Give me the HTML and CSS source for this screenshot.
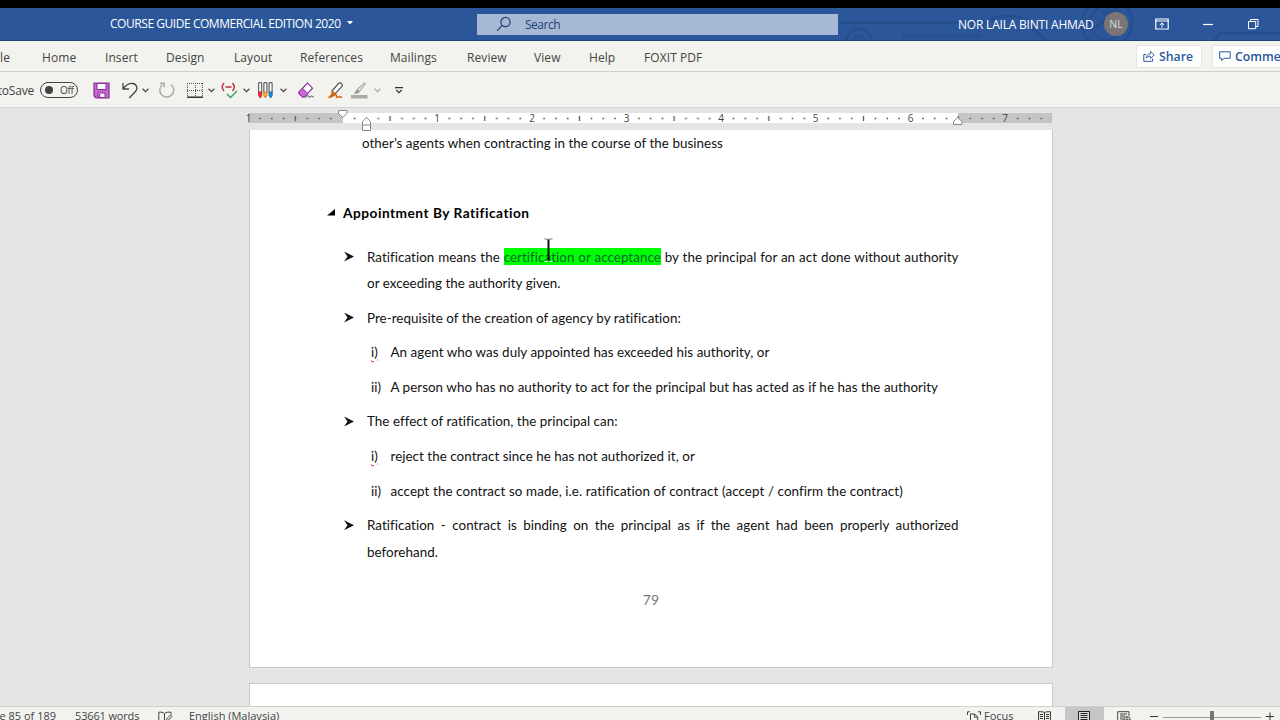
FILE: index.html
```html
<!DOCTYPE html>
<html lang="en">
<head>
  <meta charset="UTF-8" />
  <meta name="viewport" content="width=device-width, initial-scale=1" />
  <title>COURSE GUIDE COMMERCIAL EDITION 2020</title>
  <link rel="stylesheet" href="styles.css">
</head>
<body>

  <header class="titlebar">
    <div class="doc-name"><span class="doc-title">COURSE GUIDE COMMERCIAL EDITION 2020</span>
      <svg width="6" height="4" viewBox="0 0 6 4"><path d="M0 0h6L3 3.5z" fill="#fff"/></svg>
    </div>
    <div class="search">
      <svg width="16" height="16" viewBox="0 0 16 16" fill="none" stroke="#1f3f78" stroke-width="1.2"><circle cx="9.5" cy="6" r="4.6"/><path d="M6.2 9.4L1 14.8"/></svg>
      <span>Search</span>
    </div>
    <div class="account">
      <svg class="circuit" width="440" height="33" viewBox="0 0 440 33" fill="none" stroke="#284f8d" stroke-width="3">
        <path d="M0 14.500h132l16 0 8-6h22l28 24"/>
        <circle cx="19" cy="34" r="13"/><circle cx="19" cy="34" r="6"/>
        <path d="M64 33v-5h78"/>
        <circle cx="267" cy="15" r="25"/><circle cx="267" cy="15" r="17" stroke-width="2"/>
        <path d="M255 20l20-15M262 4h14v12M374 33l6-8h60"/>
      </svg>
      <span class="user">NOR LAILA BINTI AHMAD</span>
      <span class="avatar">NL</span>
      <svg class="win-ribbon" width="14" height="12" viewBox="0 0 14 12" fill="none" stroke="#fff"><path d="M.8 1h12.400v10H.8zM1 3h12" stroke-width="1.200"/><path d="M7 9.500V5M4.800 7L7 4.900 9.200 7"/></svg>
      <svg class="win-min" width="10" height="12" viewBox="0 0 10 12"><path d="M0 6.500h10" stroke="#fff" stroke-width="1.200"/></svg>
      <svg class="win-restore" width="11" height="12" viewBox="0 0 11 12" fill="none" stroke="#fff"><path d="M.5 3.500h7.200v7.200H.5zM2.500 3.500v-2h7.500v7H7.700"/></svg>
    </div>
  </header>

  <nav class="tabs">
    <span class="cut file">File</span>
    <span>Home</span>
    <span>Insert</span>
    <span>Design</span>
    <span>Layout</span>
    <span>References</span>
    <span>Mailings</span>
    <span>Review</span>
    <span>View</span>
    <span>Help</span>
    <span>FOXIT PDF</span>
    <button class="share">
      <svg width="12" height="12" viewBox="0 0 12 12" fill="none" stroke="#2b579a"><path d="M3 4.500H.8v6.800h8.800V8.500"/><path d="M3.200 8.200c.3-3 1.800-4.300 4.200-4.300V1.200l3.800 3.700-3.800 3.600V6.200C5.500 6.100 4.300 6.700 3.200 8.200z" stroke-width=".9"/></svg>
      <span>Share</span>
    </button>
    <button class="comments">
      <svg width="12" height="11" viewBox="0 0 12 11" fill="none" stroke="#2b579a"><path d="M.6.8h10.600v6.500H5L2.600 9.700V7.300h-2z"/></svg>
      <span>Comments</span>
    </button>
  </nav>

  <div class="quick">
    <span class="cut autosave">AutoSave</span>
    <span class="toggle"><i></i>Off</span>
    <!-- save -->
    <svg width="17" height="17" viewBox="0 0 17 17"><path d="M1 1h15v15H3l-2-2z" fill="#c566cf" stroke="#8a2a9b" stroke-width="1.200"/><path d="M4 1.500h9v6H4zM5 11h7v4.500H5z" fill="#fff" stroke="#8a2a9b"/><path d="M6.500 12v3.500" stroke="#8a2a9b" stroke-width="1.500"/></svg>
    <!-- undo -->
    <svg width="16" height="18" viewBox="0 0 16 18" fill="none" stroke="#444" stroke-width="1.300"><path d="M1 2v6h6M1 8C4 4 7 2.200 10.500 2.500c4.500.5 5.500 5 3 8L7.200 17"/></svg>
    <svg class="chev" viewBox="0 0 6 4"><path d="M.5.5L3 3 5.500.5"/></svg>
    <!-- redo -->
    <svg width="18" height="18" viewBox="0 0 18 18" fill="none" stroke="#aaa" stroke-width="1.500"><path d="M4.500 3.500A7 7 0 1 0 13 3.500M2 2.200h4.200v4.300"/></svg>
    <!-- borders -->
    <svg width="16" height="16" viewBox="0 0 16 16" fill="none" stroke="#555"><path d="M0 1.500h16M0 8.500h16M.5 1v14M8.500 1v14M15.500 1v14" stroke-dasharray="1 1"/><path d="M0 15.200h16" stroke="#222" stroke-width="1.400"/></svg>
    <svg class="chev" viewBox="0 0 6 4"><path d="M.5.5L3 3 5.500.5"/></svg>
    <!-- spelling -->
    <svg width="17" height="17" viewBox="0 0 17 17" fill="none"><path d="M3 1Q-.6 5 3 9M11.500 1q3.600 4 0 8M4.500 5h6" stroke="#c8283c" stroke-width="1.400"/><path d="M6 12l3.500 3.500L16 9" stroke="#39a053" stroke-width="1.400"/></svg>
    <svg class="chev" viewBox="0 0 6 4"><path d="M.5.5L3 3 5.500.5"/></svg>
    <!-- pens -->
    <svg width="15" height="17" viewBox="0 0 15 17" stroke="#444"><g fill="#fff"><path d="M.7.7h3v10h-3zM5.900.7h3v10h-3zM11.100.7h3v10h-3z"/></g><path d="M.7 10h3v3.500L2.200 16 .7 13.500z" fill="#e33" stroke="#c22"/><path d="M5.900 10h3v3.500L7.400 16l-1.500-2.500z" fill="#f5b13a" stroke="#d8801b"/><path d="M11.100 10h3v3.500L12.600 16l-1.500-2.500z" fill="#2a8bd8" stroke="#176bb0"/></svg>
    <svg class="chev" viewBox="0 0 6 4"><path d="M.5.5L3 3 5.500.5"/></svg>
    <!-- eraser -->
    <svg width="17" height="17" viewBox="0 0 17 17" fill="none"><path d="M1 10L9.500 1l5 5.200L6.500 15h-2L1 11.500z" fill="#fff" stroke="#8e2fa0" stroke-width="1.200"/><path d="M1 10l3.500-3.700 5.300 5.300L6.500 15h-2L1 11.500z" fill="#c869d4" stroke="#8e2fa0"/><path d="M8 15.500c2-2.500 3-2 3.200-.5s1.500-1 2.400-1 .8 1.500 2.200 1" stroke="#444"/></svg>
    <!-- highlighter -->
    <svg width="17" height="17" viewBox="0 0 17 17" fill="none"><path d="M5 9l6.500-7.500q1.500-1.200 3 .2t.2 3L8 12z" fill="#fff" stroke="#555" stroke-width="1.200"/><path d="M5 8.500l3.500 3.300-2.800 2.500L1 15.500l2.800-2.800z" fill="#d8690f"/><path d="M1.500 15.500c5-.7 6-3 7.500-2.700s-.5 2.700 1 2.700 1.500-1 2.500-1 1 1 2.500 1" stroke="#d8690f" stroke-width="1.500"/></svg>
    <!-- ink pen -->
    <svg width="17" height="17" viewBox="0 0 17 17" fill="none"><path d="M6 7.500L13.500.800l1 1L8.500 9.500z" fill="#ddd" stroke="#999"/><path d="M6 7.500l2.700 2.300C7.500 12 5 12 2.500 11.500 4.500 10.500 4 9 6 7.500z" fill="#999"/><path d="M0 13h16.500v3.500H0z" fill="#aaa"/></svg>
    <svg class="chev dim" viewBox="0 0 6 4"><path d="M.5.5L3 3 5.500.5"/></svg>
    <svg width="8" height="7" viewBox="0 0 8 7" fill="none" stroke="#333" stroke-width="1.200"><path d="M0 .7h8M1.300 3L4 5.700 6.700 3"/></svg>
  </div>

  <main class="workspace">
    <svg class="ruler" width="812" height="22" viewBox="0 0 812 22">
      <defs>
        <!-- one inch: seven eighth-inch marks, the middle one taller -->
        <pattern id="inch" width="94.700" height="10" patternUnits="userSpaceOnUse" x="4" y="4">
          <path d="M11.200 4.700h1.600v1.600h-1.600zM23 4.700h1.600v1.600H23zM34.800 4.700h1.600v1.600h-1.600zM46.700 3h1.300v5h-1.300zM58.500 4.700h1.600v1.600h-1.600zM70.300 4.700h1.600v1.600h-1.600zM82.100 4.700h1.600v1.600h-1.600z" fill="#555"/>
        </pattern>
      </defs>
      <rect x="4" y="4" width="804" height="10" fill="#fff"/>
      <rect x="4" y="4" width="95" height="10" fill="#c5c5c5"/>
      <rect x="714" y="4" width="94" height="10" fill="#c5c5c5"/>
      <rect x="4" y="4" width="804" height="10" fill="url(#inch)"/>
      <g class="numbers">
        <text x="4.500" y="13">1</text><text x="193" y="13">1</text><text x="288" y="13">2</text><text x="382.500" y="13">3</text><text x="477" y="13">4</text><text x="571.500" y="13">5</text><text x="666.500" y="13">6</text><text x="761" y="13">7</text>
      </g>
      <g fill="#fff" stroke="#888">
        <path d="M94.500 1.500h8.500v3L98.700 8.500 94.500 4.500z"/>
        <path d="M118.500 21.500v-9l4-4 4 4v9zM118.500 16h8"/>
        <path d="M709.500 15.500v-3l4.200-4 4.200 4v3z"/>
      </g>
    </svg>

    <article class="page">
      <p class="carry">other’s agents when contracting in the course of the business</p>
      <h1><svg width="8" height="7" viewBox="0 0 8 7"><path d="M8 0v6.500H0z"/></svg><span>Appointment By Ratification</span></h1>
      <ul class="points">
        <li class="bullet"><p class="just">Ratification means the <mark>certification or acceptance</mark> by the principal for an act done without authority</p><p>or exceeding the authority given.</p></li>
        <li class="bullet"><p>Pre-requisite of the creation of agency by ratification:</p></li>
        <li class="sub"><span class="typo">i)</span><p>An agent who was duly appointed has exceeded his authority, or</p></li>
        <li class="sub"><span>ii)</span><p>A person who has no authority to act for the principal but has acted as if he has the authority</p></li>
        <li class="bullet"><p>The effect of ratification, the principal can:</p></li>
        <li class="sub"><span class="typo">i)</span><p>reject the contract since he has not authorized it, or</p></li>
        <li class="sub"><span>ii)</span><p class="wide">accept the contract so made, i.e. ratification of contract (accept / confirm the contract)</p></li>
        <li class="bullet"><p class="just">Ratification - contract is binding on the principal as if the agent had been properly authorized</p><p>beforehand.</p></li>
      </ul>
      <div class="folio">79</div>
    </article>
    <article class="page next"></article>

    <svg class="cursor" width="9" height="25" viewBox="0 0 9 25" fill="none" stroke="#111"><path d="M.5 1h3l1 1 1-1h3" stroke="#777"/><path d="M.5 23.500h3l1-1 1 1h3" stroke="#dfd"/><path d="M4.500 1.500v21" stroke-width="2"/></svg>
  </main>

  <footer class="status">
    <span class="cut pageno">Page 85 of 189</span>
    <span class="words">53661 words</span>
    <svg class="proof" width="15" height="13" viewBox="0 0 15 13" fill="none" stroke="#444"><path d="M6.500 10V2.500C5 1.200 3 1 .8 1.200v9C3 10 5 10.200 6.500 11.500c.5-.7 1-1 2-1.200M6.500 2.500C8 1.200 10 1 13 1.200v2.500"/><path d="M8.500 10l.5-2.500L12.500 4 14 5.500 10.500 9z"/></svg>
    <span class="lang">English (Malaysia)</span>
    <svg class="focus-icon" width="14" height="13" viewBox="0 0 14 13" fill="none" stroke="#444"><path d="M.5 4V.8h2.500M11 .8h2.500V4M3.500 12V3h4.200l3 3v6M7.500 3v3.200h3"/></svg>
    <span class="focus">Focus</span>
    <svg class="read" width="13" height="13" viewBox="0 0 13 13" fill="none" stroke="#333"><path d="M6.500 12V1.500C5 .7 3 .7.600.7v10.800h5.200M6.500 1.500C8 .7 10 .7 12.400.7v10.800H7.200M2 3.500h3M2 5.500h3M2 7.500h3M2 9.500h3M8 3.500h3M8 5.500h3M8 7.500h3M8 9.500h3"/></svg>
    <span class="print"><svg width="12" height="13" viewBox="0 0 12 13"><path d="M.5.500h11v12H.5z" fill="#ddd" stroke="#222"/><path d="M2.500 2.500h7M2.500 4.500h7M2.500 6.500h7M2.500 8.500h7" stroke="#222"/></svg></span>
    <svg class="web" width="14" height="13" viewBox="0 0 14 13" fill="none" stroke="#444"><path d="M12 5V.7H.7v11H6M3 3h7M3 5h5M3 7h3.500M3 9h3"/><circle cx="10" cy="9" r="3.400"/><path d="M7 9h6M10 6v6"/></svg>
    <svg class="minus" width="8" height="12" viewBox="0 0 8 12"><path d="M0 5.500h8" stroke="#333"/></svg>
    <svg class="zoombar" width="98" height="14" viewBox="0 0 98 14"><path d="M0 6.500h98" stroke="#999"/><path d="M47 0h4v13h-4z" fill="#777"/></svg>
    <svg class="plus" width="8" height="12" viewBox="0 0 8 12"><path d="M0 5.500h8M4 1.500v8" stroke="#333"/></svg>
  </footer>

</body>
</html>
```
FILE: styles.css
```css
* {
  margin: 0; padding: 0; box-sizing: border-box;
}
body {
  width: 1280px;
  height: 720px;
  overflow: hidden;
  border-top: 8px solid #000;
  background: #e5e5e5;
  font-family: "Open Sans", "Noto Sans", sans-serif;
  font-size: 12px;
  color: #444;
  display: flex;
  flex-direction: column;
  white-space: nowrap;
}
svg { display: block; flex: none; }
.cut {
  display: flex;
  justify-content: flex-end;
  overflow: hidden;
}

/* title bar */
.titlebar {
  height: 33px;
  flex: none;
  display: flex;
  align-items: center;
  background: #2b579a;
  border-bottom: 1px solid #1f4379;
  color: #fff;
}
.doc-name {
  width: 477px;
  padding: 0 0 2px 110px;
  display: flex;
  align-items: center;
  gap: 7px;
}
.doc-title { width: 230px; letter-spacing: -0.45px; }
.search {
  width: 361px;
  height: 21px;
  padding-left: 19px;
  display: flex;
  align-items: center;
  gap: 13px;
  background: #a6b8d3;
  color: #1f3f78;
  letter-spacing: -0.5px;
}
.account {
  position: relative;
  flex: 1;
  height: 32px;
  padding-left: 120px;
  display: flex;
  align-items: center;
  overflow: hidden;
}
.circuit { position: absolute; left: 2px; top: 0; }
.account > *:not(.circuit) { position: relative; }
.user { width: 146px; letter-spacing: -0.2px; }
.avatar {
  width: 24px;
  height: 24px;
  border-radius: 50%;
  background: #7b7675;
  color: #ddd;
  font-size: 10.5px;
  line-height: 24px;
  text-align: center;
}
.win-ribbon { margin-left: 27px; }
.win-min { margin-left: 34px; }
.win-restore { margin-left: 35px; }

/* ribbon tabs */
.tabs {
  height: 31px;
  flex: none;
  display: grid;
  grid-template-columns: 42px 63px 61px 68px 66px 90px 77px 67px 55px 55px 492px 76px 90px;
  align-items: center;
  background: #f2f3ee;
  border-bottom: 1px solid #cfcfcb;
  overflow: hidden;
}
.tabs > span { letter-spacing: 0.08px; padding-top: 2px; }
.tabs > .file { padding-right: 32px; }
.tabs button {
  height: 23px;
  border: 1px solid #e4e4e0;
  border-radius: 2px;
  background: #fff;
  color: #2b579a;
  font: 600 12.3px "Open Sans", sans-serif;
  display: flex;
  align-items: center;
}
.share { width: 66px; padding-left: 6px; gap: 4px; }
.comments { width: 90px; padding-left: 6px; gap: 4px; }

/* quick access toolbar */
.quick {
  height: 36px;
  flex: none;
  display: grid;
  grid-template-columns: 40px 52.5px 29px 20px 16px 29px 21px 13px 22px 15px 22px 18px 29px 24px 23px 21px 10px;
  align-items: center;
  padding-top: 1px;
  background: #f2f3ee;
  border-bottom: 1px solid #d4d4d0;
}
.autosave { padding-right: 6px; letter-spacing: -0.2px; }
.chev {
  width: 7px;
  height: 5px;
  fill: none;
  stroke: #444;
}
.chev.dim { stroke: #aaa; }
.toggle {
  width: 38px;
  height: 16px;
  border: 1px solid #444;
  border-radius: 8px;
  display: flex;
  align-items: center;
  gap: 7px;
  padding-left: 4px;
  font-size: 10px;
  letter-spacing: -0.3px;
}
.toggle i {
  width: 8px;
  height: 8px;
  border-radius: 50%;
  background: #444;
}

/* document area */
.workspace {
  position: relative;
  flex: 1;
  min-height: 0;
  overflow: hidden;
  background: #e5e5e5;
  padding-left: 244px;
}
.ruler { margin-top: 1px; }
.numbers {
  font-size: 10px;
  fill: #444;
  text-anchor: middle;
}
.page {
  width: 804px;
  height: 538px;
  margin-left: 4.5px;
  border: 1px solid #c8c8c8;
  border-top: 0;
  background: #fff;
  color: #111;
  font: 13.4px/26.5px Lato, sans-serif;
  font-variant-ligatures: none;
  letter-spacing: 0.04px;
}
.page.next {
  margin-top: 15px;
  border-top: 1px solid #c8c8c8;
}
.carry { margin: -0.7px 0 0 112.5px; }
.page h1 {
  display: flex;
  align-items: center;
  gap: 8px;
  margin: 43.5px 0 0 77.5px;
  font-size: 13.7px;
  font-weight: 700;
  letter-spacing: 0.5px;
  color: #000;
}
.page h1 svg { margin-bottom: 3px; }
.points {
  list-style: none;
  margin: 16.7px 0 0 93.5px;
  width: 615.5px;
}
.points li { margin-bottom: 8.1px; }
.bullet { padding-left: 24px; position: relative; }
/* arrowhead marker */
.bullet::before {
  content: "";
  position: absolute;
  left: 1px;
  top: 8px;
  width: 10px;
  height: 10px;
  background: #111;
  clip-path: polygon(0 0, 100% 50%, 0 100%, 35% 50%);
}
.just { text-align: justify; text-align-last: justify; white-space: normal; }
.wide { letter-spacing: 0.085px; }
.sub { display: flex; padding-left: 28px; }
.sub > span { width: 19.5px; }
.typo {
  text-decoration: underline wavy #c23 1px;
  text-underline-offset: 1px;
}
mark { background: #0f0; color: #063; padding-top: 1px; }
.folio {
  margin-top: 22px;
  padding-left: 1px;
  text-align: center;
  color: #777;
  font-size: 14px;
}
.cursor { position: absolute; left: 544px; top: 130px; }

/* status bar */
.status {
  height: 14px;
  flex: none;
  display: flex;
  align-items: flex-start;
  overflow: hidden;
  background: #f2f3ee;
  border-top: 1px solid #d0d0cc;
  font-size: 11px;
  line-height: 18px;
}
.status svg { margin-top: 4px; }
.pageno { width: 56px; }
.words { width: 64px; margin-left: 19px; letter-spacing: -0.15px; }
.status .proof { margin-left: 19px; }
.lang { width: 92px; margin-left: 16px; }
.focus-icon { margin-left: 686px; }
.focus { width: 30px; margin-left: 3px; }
.read { margin-left: 24px; }
.print {
  width: 39px;
  height: 14px;
  margin-left: 14px;
  padding-left: 13px;
  background: #c6c6c6;
}
.web { margin-left: 13px; }
.minus { margin-left: 19px; }
.zoombar { margin-left: 5px; }
.plus { margin-left: 5px; }
```
